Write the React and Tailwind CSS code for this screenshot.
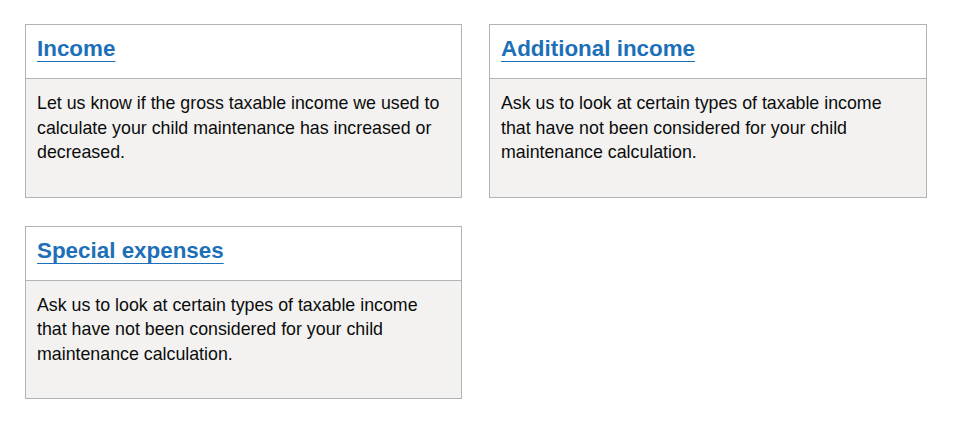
import React from 'react';

const cards = [
    {
        title: 'Income',
        body: 'Let us know if the gross taxable income we used to calculate your child maintenance has increased or decreased.',
    },
    {
        title: 'Additional income',
        body: 'Ask us to look at certain types of taxable income that have not been considered for your child maintenance calculation.',
    },
    {
        title: 'Special expenses',
        body: 'Ask us to look at certain types of taxable income that have not been considered for your child maintenance calculation.',
    },
];

const Card = ({ title, body }) => (
    <div className="border border-[#b1b4b6] bg-[#f3f2f1]">
        <div className="bg-white border-b border-[#b1b4b6] px-[11px] pt-[11px] pb-[17px]">
            <h2 className="text-[22.4px] leading-[25px] font-bold">
                <a
                    href="#"
                    className="text-[#1d70b8] underline decoration-1 underline-offset-[5px]"
                >
                    {title}
                </a>
            </h2>
        </div>
        <div className="px-[11px] pt-3 pb-[32px]">
            <p className="text-[17.8px] leading-[24.5px] text-[#0b0c0c]">{body}</p>
        </div>
    </div>
);

export default function App() {
    return (
        <div className="min-h-screen bg-white pl-[25px] pt-[24px] font-['Liberation_Sans',Arial,sans-serif]">
            <div className="grid grid-cols-[437px_438px] gap-x-[27px] gap-y-[28px]">
                {cards.map((card) => (
                    <Card key={card.title} title={card.title} body={card.body} />
                ))}
            </div>
        </div>
    );
}
